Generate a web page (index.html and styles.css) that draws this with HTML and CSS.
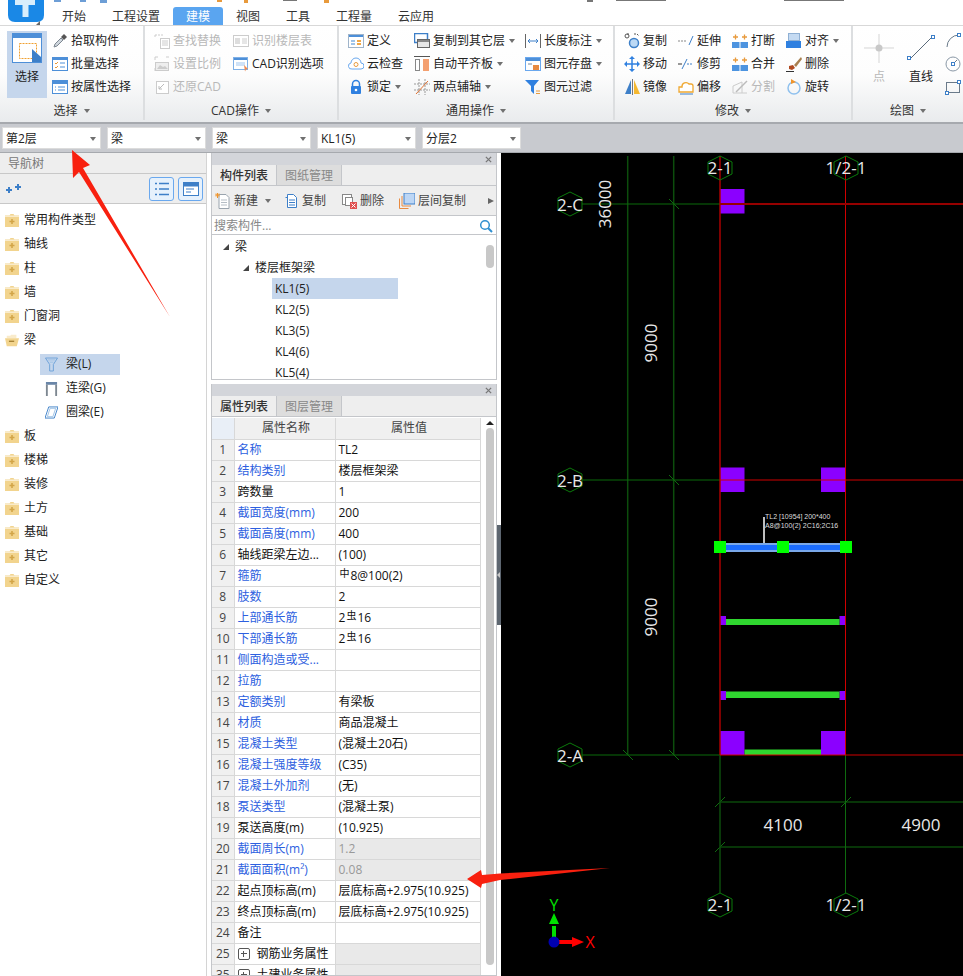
FILE: index.html
```html
<!DOCTYPE html>
<html lang="zh-CN">
<head>
    <meta charset="UTF-8">
    <meta name="viewport" content="width=device-width, initial-scale=1.0">
    <title>建模</title>
    <link rel="stylesheet" href="styles.css">
</head>
<body>
    <svg class="defs" width="0" height="0">
        <symbol id="folder" viewBox="0 0 14 14">
            <path d="M0 2.500h4.500l1-1.500h3l1 1.500H14V14H0z" fill="#f2d48e"/>
            <path d="M0 2.500h14V4H0z" fill="#f9ebcb"/>
            <path d="M4.500 8.500h5M7 6v5" stroke="#d3a548" stroke-width="1.600"/>
        </symbol>
        <symbol id="folder-open" viewBox="0 0 16 14">
            <path d="M2 2h4l1-1h6v4H2z" fill="#f9ebcb"/>
            <path d="M0 5h16l-2.500 9H2z" fill="#f2d48e"/>
            <path d="M4.500 8.500h6" stroke="#a88436" stroke-width="1.600"/>
        </symbol>
        <symbol id="close" viewBox="0 0 8 8">
            <path d="M1 1l6 6M7 1L1 7" stroke="#777" stroke-width="1.500"/>
        </symbol>
    </svg>

    <header class="topbar">
        <div class="logo">
            <svg width="36" height="22" viewBox="0 0 36 22">
                <path d="M0 0h36v15q0 7-7 7H7q-7 0-7-7z" fill="#1a88e6"/>
                <path d="M7 0h20v5h-6.500v12h-6V5H7z" fill="#d8eefc"/>
            </svg>
            <i class="logo-corner"></i>
        </div>
        <div class="top-right">
            <svg class="quick" width="914" height="4" viewBox="0 0 914 4">
                <path d="M5 0h7v2H5zM31 0h6v2h-6zM51 0h7v3h-7z" fill="#6d9ed6"/>
                <path d="M168 0h5v2h-5zM195 0h4v3h-4zM275 0h5v3h-5z" fill="#e89a3c"/>
                <path d="M234 0h14v1h-14zM538 0h6v2h-6zM567 0h50v1h-50zM735 0h60v1h-60z" fill="#777"/>
            </svg>
            <nav class="tabs">
                <span class="tab">开始</span>
                <span class="tab">工程设置</span>
                <span class="tab active">建模</span>
                <span class="tab">视图</span>
                <span class="tab">工具</span>
                <span class="tab">工程量</span>
                <span class="tab">云应用</span>
            </nav>
        </div>
    </header>

    <section class="ribbon">
        <div class="rgroup g-select">
            <div class="rbody">
                <div class="bigbtn selected">
                    <svg width="30" height="30" viewBox="0 0 30 30">
                        <rect x=".5" y=".5" width="29" height="29" fill="#fff" stroke="#4d8fd8"/>
                        <rect x="1" y="1" width="28" height="4" fill="#4d8fd8"/>
                        <rect x="7.500" y="10.500" width="17" height="15" fill="none" stroke="#f0a030" stroke-dasharray="2 1"/>
                        <path d="M20 16l9 8v5h-9z" fill="#3d7fc8"/>
                    </svg>
                    <span>选择</span>
                </div>
                <div class="rcol">
                    <div class="ritem">
                        <svg class="ico" viewBox="0 0 16 16"><path d="M2 14l1-3 6-6 2 2-6 6z" fill="#cfd6dd" stroke="#7d8791"/><path d="M9 4l3-3 3 3-3 3z" fill="#555"/></svg>
                        <span>拾取构件</span>
                    </div>
                    <div class="ritem">
                        <svg class="ico" viewBox="0 0 16 16"><rect x=".5" y="1.500" width="15" height="13" fill="#fff" stroke="#4d8fd8"/><rect x="1" y="2" width="14" height="2" fill="#4d8fd8"/><path d="M3 7l1 1 2-2M3 11l1 1 2-2" fill="none" stroke="#e89a3c"/><path d="M8 7h5M8 11h5" stroke="#4d8fd8"/></svg>
                        <span>批量选择</span>
                    </div>
                    <div class="ritem">
                        <svg class="ico" viewBox="0 0 16 16"><rect x=".5" y="1.500" width="15" height="13" fill="#fff" stroke="#4d8fd8"/><rect x="1" y="2" width="14" height="3" fill="#4d8fd8"/><path d="M3 8h1M6 8h7M3 11h1M6 11h7" stroke="#4d8fd8"/></svg>
                        <span>按属性选择</span>
                    </div>
                </div>
            </div>
            <div class="rlabel">选择<i class="caret"></i></div>
        </div>

        <div class="rgroup g-cad">
            <div class="rbody">
                <div class="rcol c79">
                    <div class="ritem off">
                        <svg class="ico" viewBox="0 0 16 16"><path d="M1 2h9M1 2v3" stroke="#ccc" stroke-dasharray="2 1"/><rect x="6.500" y="5.500" width="9" height="10" fill="#fff" stroke="#ccc"/><path d="M8 8h6M8 10h6M8 12h6" stroke="#ccc"/></svg>
                        <span>查找替换</span>
                    </div>
                    <div class="ritem off">
                        <svg class="ico" viewBox="0 0 16 16"><path d="M1 1v3M1 1h3M15 1h-3M1 15v-3" stroke="#ccc"/><rect x="1.500" y="6.500" width="13" height="8" fill="#eee" stroke="#ccc"/><path d="M3 13l3-4 3 2 2-1 3 3z" fill="#ccc"/></svg>
                        <span>设置比例</span>
                    </div>
                    <div class="ritem off">
                        <svg class="ico" viewBox="0 0 16 16"><rect x="2.500" y="2.500" width="12" height="12" fill="#fff" stroke="#ccc"/><path d="M10 5l-5 5M5 7v3h3" fill="none" stroke="#bbb"/></svg>
                        <span>还原CAD</span>
                    </div>
                </div>
                <div class="rcol">
                    <div class="ritem off">
                        <svg class="ico" viewBox="0 0 16 16"><rect x=".5" y="2.500" width="15" height="11" fill="#fff" stroke="#ccc"/><rect x="2" y="5" width="5" height="6" fill="#ddd"/><path d="M9 6h5M9 8h5M9 10h5" stroke="#ccc"/></svg>
                        <span>识别楼层表</span>
                    </div>
                    <div class="ritem">
                        <svg class="ico" viewBox="0 0 16 16"><rect x=".5" y="1.500" width="14" height="12" fill="#fff" stroke="#7fb0e6"/><rect x="1" y="2" width="13" height="2" fill="#4d8fd8"/><path d="M3 6h9v4H3z" fill="#cfe2f7"/><path d="M11 9l4 4-2 .5-1 2z" fill="#f08a50"/></svg>
                        <span>CAD识别选项</span>
                    </div>
                </div>
            </div>
            <div class="rlabel">CAD操作<i class="caret"></i></div>
        </div>

        <div class="rgroup g-common">
            <div class="rbody">
                <div class="rcol c66">
                    <div class="ritem">
                        <svg class="ico" viewBox="0 0 16 16"><rect x=".5" y="1.500" width="15" height="13" fill="#fff" stroke="#9fb4ca"/><rect x="1" y="2" width="14" height="2" fill="#4d8fd8"/><path d="M3 7h4v2H3zM3 10h4v2H3z" fill="#9fc4ea"/><path d="M9 7h4v2H9zM9 10h4v2H9z" fill="#f0a848"/></svg>
                        <span>定义</span>
                    </div>
                    <div class="ritem">
                        <svg class="ico" viewBox="0 0 16 16"><path d="M4 13a3 3 0 0 1-1-6 5 5 0 0 1 10 0 3 3 0 0 1 0 6z" fill="#fff" stroke="#6aa8ee"/><circle cx="8" cy="8.500" r="2" fill="none" stroke="#e89a3c"/></svg>
                        <span>云检查</span>
                    </div>
                    <div class="ritem">
                        <svg class="ico" viewBox="0 0 16 16"><path d="M4.500 8V5a3.500 3.500 0 0 1 7 0v3" fill="none" stroke="#2f80e0" stroke-width="1.500"/><rect x="3" y="7" width="10" height="8" rx="1" fill="#2f80e0"/><circle cx="8" cy="11" r="1.300" fill="#fff"/></svg>
                        <span>锁定</span><i class="caret"></i>
                    </div>
                </div>
                <div class="rcol c111">
                    <div class="ritem">
                        <svg class="ico" viewBox="0 0 16 16"><rect x=".5" y=".5" width="13" height="9" fill="#fff" stroke="#3d7fc8" stroke-width="1.500"/><rect x="3.500" y="6.500" width="12" height="8" fill="#e6e6e6" stroke="#666"/><rect x="4" y="7" width="11" height="2" fill="#888"/></svg>
                        <span>复制到其它层</span><i class="caret"></i>
                    </div>
                    <div class="ritem">
                        <svg class="ico" viewBox="0 0 16 16"><path d="M0 .5h16" stroke="#555"/><rect x="1.500" y="3.500" width="4" height="11" fill="#fff" stroke="#888"/><rect x="9" y="3" width="6" height="12" fill="#f4a070"/></svg>
                        <span>自动平齐板</span><i class="caret"></i>
                    </div>
                    <div class="ritem">
                        <svg class="ico" viewBox="0 0 16 16"><path d="M0 5h16M0 11h16M5 0v16M11 0v16" stroke="#999" stroke-dasharray="2 1"/><path d="M2 15L14 2" stroke="#e07030"/></svg>
                        <span>两点辅轴</span><i class="caret"></i>
                    </div>
                </div>
                <div class="rcol">
                    <div class="ritem">
                        <svg class="ico" viewBox="0 0 16 16"><path d="M.5 1v14M15.500 1v14" stroke="#666"/><path d="M3 8h10M3 8l2-2M3 8l2 2M13 8l-2-2M13 8l-2 2" fill="none" stroke="#3d7fc8"/></svg>
                        <span>长度标注</span><i class="caret"></i>
                    </div>
                    <div class="ritem">
                        <svg class="ico" viewBox="0 0 16 16"><rect x=".5" y="1.500" width="15" height="13" fill="#fff" stroke="#6aa8ee"/><rect x="1" y="2" width="14" height="3" fill="#4d8fd8"/><path d="M3 7h4v2H3z" fill="#b8c4d0"/><rect x="8" y="9" width="6" height="5" fill="#e88a40"/></svg>
                        <span>图元存盘</span><i class="caret"></i>
                    </div>
                    <div class="ritem">
                        <svg class="ico" viewBox="0 0 16 16"><path d="M0 1h14L9 7v8L6 12V7z" fill="#2f80e0"/><path d="M11 12h4M11 14.500h4" stroke="#e89a3c"/></svg>
                        <span>图元过滤</span>
                    </div>
                </div>
            </div>
            <div class="rlabel">通用操作<i class="caret"></i></div>
        </div>

        <div class="rgroup g-modify">
            <div class="rbody">
                <div class="rcol c54">
                    <div class="ritem">
                        <svg class="ico" viewBox="0 0 16 16"><path d="M3 1h3M10 1h3l2 2" fill="none" stroke="#555" stroke-dasharray="2 1"/><circle cx="3" cy="3" r="2" fill="none" stroke="#555"/><circle cx="10" cy="10" r="4.500" fill="#bcd9f5" stroke="#3d7fc8" stroke-width="1.500"/></svg>
                        <span>复制</span>
                    </div>
                    <div class="ritem">
                        <svg class="ico" viewBox="0 0 16 16"><path d="M8 1v14M1 8h14" stroke="#2f80e0" stroke-width="1.500"/><path d="M8 0l3 3H5zM8 16l3-3H5zM0 8l3-3v6zM16 8l-3-3v6z" fill="#2f80e0"/></svg>
                        <span>移动</span>
                    </div>
                    <div class="ritem">
                        <svg class="ico" viewBox="0 0 16 16"><path d="M7 1v14L1 15z" fill="#3d7fc8"/><path d="M8.500 0v16" stroke="#777"/><path d="M10 1l6 14h-6z" fill="#f5b830"/></svg>
                        <span>镜像</span>
                    </div>
                </div>
                <div class="rcol c54">
                    <div class="ritem">
                        <svg class="ico" viewBox="0 0 16 16"><path d="M0 8h9" stroke="#888" stroke-dasharray="2 1"/><path d="M11 12l4-9" stroke="#3d7fc8"/></svg>
                        <span>延伸</span>
                    </div>
                    <div class="ritem">
                        <svg class="ico" viewBox="0 0 16 16"><path d="M0 8h4" stroke="#333"/><path d="M4 13l5-10" stroke="#3d7fc8"/><path d="M9 8h6" stroke="#3d7fc8" stroke-dasharray="2 1"/></svg>
                        <span>修剪</span>
                    </div>
                    <div class="ritem">
                        <svg class="ico" viewBox="0 0 16 16"><path d="M1 13V8h3a4 4 0 0 1 7-3h2a2 2 0 0 1 2 2v6z" fill="#fff" stroke="#f0a830" stroke-width="1.300"/><path d="M2 15h13" stroke="#3d7fc8"/></svg>
                        <span>偏移</span>
                    </div>
                </div>
                <div class="rcol c54">
                    <div class="ritem">
                        <svg class="ico" viewBox="0 0 16 16"><path d="M0 9h7.500v6H0zM8.500 9H16v6H8.500z" fill="#4d94e0"/><path d="M1 4h5M3.500 1.500v5M10 4h5M12.500 1.500v5" stroke="#e89a3c" stroke-width="1.300"/></svg>
                        <span>打断</span>
                    </div>
                    <div class="ritem">
                        <svg class="ico" viewBox="0 0 16 16"><path d="M0 9h7.500v6H0zM8.500 9H16v6H8.500z" fill="#4d94e0"/><path d="M1 4h5M3.500 1.500v5M10 4h5M12.500 1.500v5" stroke="#e89a3c" stroke-width="1.300"/></svg>
                        <span>合并</span>
                    </div>
                    <div class="ritem off">
                        <svg class="ico" viewBox="0 0 16 16"><path d="M1 14h14M1 14V7l9-4v11" fill="none" stroke="#ccc"/><path d="M4 13L15 2" stroke="#bbb" stroke-width="1.500"/></svg>
                        <span>分割</span>
                    </div>
                </div>
                <div class="rcol">
                    <div class="ritem">
                        <svg class="ico" viewBox="0 0 16 16"><rect x="2.500" y=".5" width="11" height="7" fill="#c4daf2" stroke="#8fb0d4"/><rect x="0" y="8" width="15" height="7" fill="#2f80e0"/></svg>
                        <span>对齐</span><i class="caret"></i>
                    </div>
                    <div class="ritem">
                        <svg class="ico" viewBox="0 0 16 16"><path d="M8 9L15 1l1 2-6 8z" fill="#a88050"/><path d="M3 10l4-1 2 3-3 2-3-1z" fill="#b04a20"/><path d="M0 15.500h8" stroke="#333"/></svg>
                        <span>删除</span>
                    </div>
                    <div class="ritem">
                        <svg class="ico" viewBox="0 0 16 16"><circle cx="8" cy="9" r="6" fill="none" stroke="#8fc0ee" stroke-width="1.500"/><path d="M5 0l5 3-5 2z" fill="#f0952c"/></svg>
                        <span>旋转</span>
                    </div>
                </div>
            </div>
            <div class="rlabel">修改<i class="caret"></i></div>
        </div>

        <div class="rgroup g-draw">
            <div class="rbody">
                <div class="bigbtn off">
                    <svg width="30" height="30" viewBox="0 0 30 30"><path d="M15 1v29M0 15h30" stroke="#d5d5d5"/><circle cx="15" cy="15" r="3.500" fill="#c8c8c8"/></svg>
                    <span>点</span>
                </div>
                <div class="bigbtn">
                    <svg width="30" height="30" viewBox="0 0 30 30"><path d="M4 26L26 4" stroke="#5a6a7a"/><rect x="1.500" y="23.500" width="3" height="3" fill="#fff" stroke="#3d7fc8"/><rect x="25.500" y="2.500" width="3" height="3" fill="#fff" stroke="#3d7fc8"/></svg>
                    <span>直线</span>
                </div>
                <div class="rcol">
                    <div class="ritem"><svg class="ico" viewBox="0 0 16 16"><path d="M2 14a12 12 0 0 1 12-12" fill="none" stroke="#6a7a8a"/><rect x="12.500" y=".5" width="3" height="3" fill="#fff" stroke="#3d7fc8"/></svg></div>
                    <div class="ritem"><svg class="ico" viewBox="0 0 16 16"><circle cx="8" cy="8" r="7" fill="none" stroke="#8a98a6"/><path d="M8 8l4-4" stroke="#6a7a8a"/><rect x="6.500" y="6.500" width="3" height="3" fill="#fff" stroke="#3d7fc8"/></svg></div>
                    <div class="ritem"><svg class="ico" viewBox="0 0 16 16"><rect x="1.500" y="3.500" width="13" height="10" fill="none" stroke="#6a7a8a"/><rect x=".5" y="12.500" width="3" height="3" fill="#fff" stroke="#3d7fc8"/><rect x="12.500" y="1.500" width="3" height="3" fill="#fff" stroke="#3d7fc8"/></svg></div>
                </div>
            </div>
            <div class="rlabel">绘图<i class="caret"></i></div>
        </div>
    </section>

    <div class="selectbar">
        <div class="combo">第2层<i class="caret"></i></div>
        <div class="combo">梁<i class="caret"></i></div>
        <div class="combo">梁<i class="caret"></i></div>
        <div class="combo">KL1(5)<i class="caret"></i></div>
        <div class="combo">分层2<i class="caret"></i></div>
    </div>

    <main class="main">
        <aside class="nav">
            <div class="nav-title">导航树</div>
            <div class="nav-tools">
                <svg class="sparkle" width="16" height="12" viewBox="0 0 16 12"><path d="M0 7h6M3 4v6M9 4h6M12 1v6" stroke="#3d7fc8" stroke-width="2"/></svg>
                <span class="spacer"></span>
                <div class="toolbtn">
                    <svg width="14" height="14" viewBox="0 0 14 14"><path d="M0 1.500h2M4 1.500h10M0 7h2M4 7h10M0 12.500h2M4 12.500h10" stroke="#3d7fc8" stroke-width="1.300"/></svg>
                </div>
                <div class="toolbtn">
                    <svg width="16" height="14" viewBox="0 0 16 14"><rect x=".5" y=".5" width="15" height="13" fill="#fff" stroke="#3d7fc8"/><rect x="1" y="1" width="14" height="3.500" fill="#3d7fc8"/><path d="M3 7h8M3 10h5" stroke="#3d7fc8"/></svg>
                </div>
            </div>
            <ul class="nav-tree">
                <li><svg class="folder"><use href="#folder"/></svg>常用构件类型</li>
                <li><svg class="folder"><use href="#folder"/></svg>轴线</li>
                <li><svg class="folder"><use href="#folder"/></svg>柱</li>
                <li><svg class="folder"><use href="#folder"/></svg>墙</li>
                <li><svg class="folder"><use href="#folder"/></svg>门窗洞</li>
                <li><svg class="folder"><use href="#folder-open"/></svg>梁</li>
                <li class="child">
                    <span class="child-box current">
                        <svg class="child-ico" viewBox="0 0 14 16"><path d="M.5 1h13L9 8v7H5V8z" fill="none" stroke="#6aa0d8"/><path d="M3 3h8M5 5.500h4" stroke="#9cc0e4"/></svg>梁(L)
                    </span>
                </li>
                <li class="child">
                    <span class="child-box">
                        <svg class="child-ico" viewBox="0 0 14 16"><path d="M1 1h12v3H1z" fill="#6a86a8"/><path d="M2 4v12M12 4v12" stroke="#7d8791" stroke-width="2"/></svg>连梁(G)
                    </span>
                </li>
                <li class="child">
                    <span class="child-box">
                        <svg class="child-ico" viewBox="0 0 14 16"><path d="M4 2h10l-4 12H0z" fill="none" stroke="#3d7fc8"/><path d="M5.500 3.500h6l-3 9H2.500z" fill="none" stroke="#9cc0e4"/></svg>圈梁(E)
                    </span>
                </li>
                <li><svg class="folder"><use href="#folder"/></svg>板</li>
                <li><svg class="folder"><use href="#folder"/></svg>楼梯</li>
                <li><svg class="folder"><use href="#folder"/></svg>装修</li>
                <li><svg class="folder"><use href="#folder"/></svg>土方</li>
                <li><svg class="folder"><use href="#folder"/></svg>基础</li>
                <li><svg class="folder"><use href="#folder"/></svg>其它</li>
                <li><svg class="folder"><use href="#folder"/></svg>自定义</li>
            </ul>
        </aside>

        <div class="middle">
            <section class="panel list-panel">
                <div class="panel-strip"><svg class="close"><use href="#close"/></svg></div>
                <div class="panel-tabs">
                    <span class="ptab active">构件列表</span>
                    <span class="ptab">图纸管理</span>
                </div>
                <div class="list-tools">
                    <span class="ltool ltool-new">
                        <svg class="ico" viewBox="0 0 16 16"><path d="M4 1.500h7l3 3v11H4z" fill="#fff" stroke="#9aa4ae"/><path d="M6 7h6M6 9.500h6M6 12h6" stroke="#b5bdc5"/><path d="M0 2h5M2.500 0v5M1 .5l3 3M4 .5l-3 3" stroke="#f0952c"/></svg>
                        新建<i class="caret"></i>
                    </span>
                    <span class="ltool">
                        <svg class="ico" viewBox="0 0 16 16"><path d="M2.500 4.500h2M4.500 1.500h6l3 3v10h-9z" fill="#fff" stroke="#3d7fc8"/><path d="M6 7h6M6 9.500h6M6 12h6" stroke="#3d7fc8"/></svg>
                        复制
                    </span>
                    <span class="ltool">
                        <svg class="ico" viewBox="0 0 16 16"><rect x="1.500" y="1.500" width="9" height="10" fill="#fff" stroke="#888"/><rect x="4.500" y="4.500" width="7" height="8" fill="#fff" stroke="#888"/><rect x="9" y="9" width="7" height="7" fill="#e05050"/><path d="M10.500 10.500l4 4M14.500 10.500l-4 4" stroke="#fff"/></svg>
                        删除
                    </span>
                    <span class="ltool">
                        <svg class="ico" viewBox="0 0 16 16"><path d="M.5 5.500v10h9M3 3v10h9" fill="none" stroke="#e88a40"/><rect x="5" y="0" width="11" height="11" fill="#bcd6f5" stroke="#3d7fc8"/></svg>
                        层间复制
                    </span>
                    <span class="more"></span>
                </div>
                <div class="search">
                    <span>搜索构件...</span>
                    <svg width="14" height="14" viewBox="0 0 14 14"><circle cx="6" cy="6" r="4.300" fill="none" stroke="#2f8fd0" stroke-width="1.500"/><path d="M9 9l4 4" stroke="#2f8fd0" stroke-width="2"/></svg>
                </div>
                <div class="list-body">
                    <ul class="list-tree">
                        <li class="lv1"><i class="expand"></i>梁</li>
                        <li class="lv2"><i class="expand"></i>楼层框架梁</li>
                        <li class="lv3 current">KL1(5)</li>
                        <li class="lv3">KL2(5)</li>
                        <li class="lv3">KL3(5)</li>
                        <li class="lv3">KL4(6)</li>
                        <li class="lv3">KL5(4)</li>
                    </ul>
                    <div class="list-thumb"></div>
                </div>
            </section>

            <section class="panel prop-panel">
                <div class="panel-strip"><svg class="close"><use href="#close"/></svg></div>
                <div class="panel-tabs">
                    <span class="ptab active">属性列表</span>
                    <span class="ptab">图层管理</span>
                </div>
                <div class="prop-body">
                    <table class="props">
                        <colgroup><col class="c-num"><col class="c-name"><col class="c-val"></colgroup>
                        <thead>
                            <tr><th class="corner"></th><th>属性名称</th><th>属性值</th></tr>
                        </thead>
                        <tbody>
                            <tr><td class="num">1</td><td class="link">名称</td><td>TL2</td></tr>
                            <tr><td class="num">2</td><td class="link">结构类别</td><td>楼层框架梁</td></tr>
                            <tr><td class="num">3</td><td>跨数量</td><td>1</td></tr>
                            <tr><td class="num">4</td><td class="link">截面宽度(mm)</td><td>200</td></tr>
                            <tr><td class="num">5</td><td class="link">截面高度(mm)</td><td>400</td></tr>
                            <tr><td class="num">6</td><td>轴线距梁左边...</td><td>(100)</td></tr>
                            <tr><td class="num">7</td><td class="link">箍筋</td><td><span class="rebar">中</span>8@100(2)</td></tr>
                            <tr><td class="num">8</td><td class="link">肢数</td><td>2</td></tr>
                            <tr><td class="num">9</td><td class="link">上部通长筋</td><td>2<span class="rebar">虫</span>16</td></tr>
                            <tr><td class="num">10</td><td class="link">下部通长筋</td><td>2<span class="rebar">虫</span>16</td></tr>
                            <tr><td class="num">11</td><td class="link">侧面构造或受...</td><td></td></tr>
                            <tr><td class="num">12</td><td class="link">拉筋</td><td></td></tr>
                            <tr><td class="num">13</td><td class="link">定额类别</td><td>有梁板</td></tr>
                            <tr><td class="num">14</td><td class="link">材质</td><td>商品混凝土</td></tr>
                            <tr><td class="num">15</td><td class="link">混凝土类型</td><td>(混凝土20石)</td></tr>
                            <tr><td class="num">16</td><td class="link">混凝土强度等级</td><td>(C35)</td></tr>
                            <tr><td class="num">17</td><td class="link">混凝土外加剂</td><td>(无)</td></tr>
                            <tr><td class="num">18</td><td class="link">泵送类型</td><td>(混凝土泵)</td></tr>
                            <tr><td class="num">19</td><td>泵送高度(m)</td><td>(10.925)</td></tr>
                            <tr><td class="num">20</td><td class="link">截面周长(m)</td><td class="locked">1.2</td></tr>
                            <tr><td class="num">21</td><td class="link">截面面积(m²)</td><td class="locked">0.08</td></tr>
                            <tr><td class="num">22</td><td>起点顶标高(m)</td><td>层底标高+2.975(10.925)</td></tr>
                            <tr><td class="num">23</td><td>终点顶标高(m)</td><td>层底标高+2.975(10.925)</td></tr>
                            <tr><td class="num">24</td><td>备注</td><td></td></tr>
                            <tr><td class="num">25</td><td><i class="plus"></i>钢筋业务属性</td><td class="locked"></td></tr>
                            <tr><td class="num">35</td><td><i class="plus"></i>土建业务属性</td><td class="locked"></td></tr>
                        </tbody>
                    </table>
                    <div class="prop-scroll">
                        <i class="scroll-up"></i>
                        <div class="prop-thumb"></div>
                    </div>
                </div>
            </section>
        </div>

        <div class="splitter"><div class="split-handle"><i></i></div></div>

        <div class="canvas">
            <svg class="drawing" width="462" height="823" viewBox="501 153 462 823">
                <!-- dimension lines -->
                <g stroke="#0c4d0c" fill="none">
                    <path d="M627.700 156V755M673.700 156V755" stroke-width="1.500"/>
                    <path d="M720 802H963M720 847H963" stroke="#0f6a0f"/>
                    <path d="M669 199l10 10M669 475l10 10M623 750l10 10M669 750l10 10M715 807l10-10M841 807l10-10M715 852l10-10" stroke="#0f6a0f"/>
                </g>
                <!-- axes -->
                <g fill="none">
                    <path d="M582 204H720M582 480H720M582 755H720" stroke="#0b6a0b"/>
                    <path d="M720 755V893" stroke="#0c4d0c" stroke-width="1.500"/>
                    <path d="M845.500 755V893" stroke="#0f6a0f"/>
                </g>
                <!-- columns -->
                <g fill="#8b00ff">
                    <rect x="720" y="189" width="24.500" height="24.500"/>
                    <rect x="720" y="467.500" width="24.500" height="24.500"/>
                    <rect x="821" y="467.500" width="24.500" height="24.500"/>
                    <rect x="720" y="731" width="24.500" height="24"/>
                    <rect x="821" y="731" width="24.500" height="24"/>
                    <rect x="720" y="616" width="6" height="9"/>
                    <rect x="839.500" y="616" width="6" height="9"/>
                    <rect x="720" y="691" width="6" height="9"/>
                    <rect x="839.500" y="691" width="6" height="9"/>
                </g>
                <!-- beams -->
                <g fill="#2fd62f">
                    <rect x="726" y="619" width="113.500" height="6"/>
                    <rect x="726" y="691.500" width="113.500" height="6.500"/>
                    <rect x="744.500" y="749.500" width="76.500" height="5.500"/>
                </g>
                <rect x="726" y="543" width="114" height="9" fill="#7aa8e8"/>
                <rect x="726" y="545" width="114" height="5" fill="#1a6cff"/>
                <g fill="none">
                    <path d="M720 156V755" stroke="#a80000" stroke-width="1.500"/>
                    <path d="M845.500 156V755" stroke="#d00000"/>
                    <path d="M720 204H963" stroke="#960000" stroke-width="2"/>
                    <path d="M720 480H963M720 755H963" stroke="#d00000"/>
                </g>
                <g fill="#00ff00">
                    <rect x="714" y="541" width="12" height="12"/>
                    <rect x="777" y="541" width="12" height="12"/>
                    <rect x="840" y="541" width="12" height="12"/>
                </g>
                <path d="M764 517V543" stroke="#fff" stroke-width="1.500"/>
                <!-- axis bubbles -->
                <g fill="none" stroke="#0b7a0b">
                    <path d="M570 192l12 6v12l-12 6-12-6v-12z"/>
                    <path d="M570 468l12 6v12l-12 6-12-6v-12z"/>
                    <path d="M570 743l12 6v12l-12 6-12-6v-12z"/>
                    <path d="M720 156l12 6v12l-12 6-12-6v-12z"/>
                    <path d="M846 156l12 6v12l-12 6-12-6v-12z"/>
                    <path d="M720 893l12 6v12l-12 6-12-6v-12z"/>
                    <path d="M846 893l12 6v12l-12 6-12-6v-12z"/>
                </g>
                <g class="cad-text">
                    <text x="570" y="211">2-C</text>
                    <text x="570" y="487">2-B</text>
                    <text x="570" y="762">2-A</text>
                    <text x="720" y="174">2-1</text>
                    <text x="846" y="174">1/2-1</text>
                    <text x="720" y="911">2-1</text>
                    <text x="846" y="911">1/2-1</text>
                    <text x="783" y="831">4100</text>
                    <text x="921" y="831">4900</text>
                    <text transform="translate(611 204) rotate(-90)">36000</text>
                    <text transform="translate(657 343) rotate(-90)">9000</text>
                    <text transform="translate(657 617) rotate(-90)">9000</text>
                </g>
                <g class="cad-small">
                    <text x="765" y="519">TL2 [10954] 200*400</text>
                    <text x="765" y="528">A8@100(2) 2C16;2C16</text>
                </g>
                <!-- coordinate axes -->
                <path d="M554 942V926" stroke="#00e000" stroke-width="4"/>
                <path d="M554 913l5 11h-10z" fill="#00e000"/>
                <path d="M554 942H572" stroke="#ff0000" stroke-width="4"/>
                <path d="M584 942l-12-5v10z" fill="#ff0000"/>
                <circle cx="554" cy="942" r="5.500" fill="#0000b0"/>
                <text class="axis-y" x="554" y="911">Y</text>
                <text class="axis-x" x="590" y="948">X</text>
            </svg>
        </div>
    </main>

    <!-- red annotation arrows over the screenshot -->
    <svg class="marks" width="963" height="976" viewBox="0 0 963 976">
        <path d="M72 150L90 165 83 168 170 317 79 172 73 178z" fill="#f8200f"/>
        <path d="M467 879L481 870 482 875 500 873.500 610 868 500 880 482 884 481 888z" fill="#f8200f"/>
    </svg>
</body>
</html>
```

FILE: styles.css
```css
* {
    box-sizing: border-box;
}

html, body {
    height: 976px;
    overflow: hidden;
}

body {
    margin: 0;
    width: 963px;
    position: relative;
    font-family: "Open Sans", "Noto Sans CJK SC", "Liberation Sans", sans-serif;
    font-size: 12px;
    line-height: 16px;
    color: #222;
    background-color: #fff;
}

ul {
    list-style: none;
    margin: 0;
    padding: 0;
}

i {
    display: block;
}

.defs {
    position: absolute;
}

.caret {
    display: inline-block;
    width: 0;
    height: 0;
    border-left: 3.500px solid transparent;
    border-right: 3.500px solid transparent;
    border-top: 4px solid #707070;
    vertical-align: middle;
}

/* top */
.topbar {
    display: flex;
    height: 26px;
    border-bottom: 1px solid #d8d8d8;
}

.logo {
    width: 49px;
    padding-left: 8px;
    position: relative;
}

.logo-corner {
    position: absolute;
    left: 36px;
    bottom: 0;
    width: 0;
    height: 0;
    border-left: 4px solid transparent;
    border-bottom: 4px solid #666;
}

.top-right {
    flex: 1;
}

.quick {
    display: block;
}

.tabs {
    display: flex;
    height: 21px;
    padding-top: 3px;
}

.tab {
    padding: 0 13px;
    height: 18px;
    line-height: 19px;
    color: #333;
}

.tab.active {
    color: #fff;
    background-color: #5aa5f0;
    border-radius: 3px 3px 0 0;
}

/* ribbon */
.ribbon {
    display: flex;
    height: 98px;
    background: linear-gradient(#fff, #fdfdfd 50%, #e9ebed);
    border-bottom: 2px solid #a6a9ae;
}

.rgroup {
    display: flex;
    flex-direction: column;
    height: 94px;
    border-right: 2px solid #dcdee0;
}

.g-select { width: 145px; }
.g-cad { width: 194px; }
.g-common { width: 276px; }
.g-modify { width: 238px; }
.g-draw { flex: 1; border-right: none; }

.rbody {
    display: flex;
    height: 75px;
    padding: 3px 0 0 9px;
}

.g-select .rbody {
    padding-left: 7px;
}

.g-draw .rbody {
    padding-left: 8px;
    gap: 6px;
}

.rlabel {
    display: flex;
    justify-content: center;
    align-items: center;
    gap: 6px;
    height: 19px;
    color: #333;
}

.rcol {
    display: flex;
    flex-direction: column;
    flex-shrink: 0;
}

.c54 { width: 54px; }
.c66 { width: 66px; }
.c79 { width: 79px; }
.c111 { width: 111px; }

.ritem {
    display: flex;
    align-items: center;
    gap: 3px;
    height: 23px;
    white-space: nowrap;
}

.ritem .caret {
    margin-left: 1px;
}

.ritem.off, .bigbtn.off {
    color: #b8b8b8;
}

.ico {
    width: 16px;
    height: 16px;
    flex-shrink: 0;
}

.bigbtn {
    display: flex;
    flex-direction: column;
    align-items: center;
    width: 36px;
    height: 67px;
    margin-top: 2px;
    padding-top: 2px;
    gap: 6px;
}

.bigbtn.selected {
    width: 40px;
    margin-right: 5px;
    background-color: #c5d6ec;
}

/* combos */
.selectbar {
    display: flex;
    gap: 6px;
    height: 28px;
    padding: 3px 2px 0;
    background-color: #c8cacf;
}

.combo {
    display: flex;
    align-items: center;
    justify-content: space-between;
    width: 99px;
    height: 22px;
    padding: 1px 4px 0 3px;
    background-color: #fff;
    border: 1px solid #dcdcdc;
}

/* main */
.main {
    display: flex;
    height: 824px;
    border-top: 1px solid #a6a9ae;
}

.nav {
    width: 207px;
    border-right: 1px solid #d4d4d4;
    flex-shrink: 0;
}

.nav-title {
    height: 21px;
    padding-left: 8px;
    line-height: 22px;
    color: #777;
    background-color: #eee;
    border-bottom: 1px solid #c8c8c8;
}

.nav-tools {
    display: flex;
    align-items: center;
    gap: 4px;
    height: 30px;
    padding: 0 3px 0 6px;
    background-color: #eee;
    border-bottom: 1px solid #c8c8c8;
}

.spacer {
    flex: 1;
}

.toolbtn {
    display: flex;
    justify-content: center;
    align-items: center;
    width: 25px;
    height: 24px;
    background-color: #e6f1fc;
    border: 1px solid #6aa8ee;
    border-radius: 3px;
}

.nav-tree {
    padding-top: 4px;
}

.nav-tree li {
    display: flex;
    align-items: center;
    height: 24px;
    padding-left: 5px;
    gap: 5px;
}

.folder {
    width: 14px;
    height: 14px;
}

.nav-tree .child {
    padding-left: 40px;
}

.child-box {
    display: flex;
    align-items: center;
    gap: 8px;
    width: 80px;
    height: 21px;
    padding-left: 5px;
}

.child-box.current {
    background-color: #c5d6ec;
}

.child-ico {
    width: 13px;
    height: 15px;
}

/* middle panels */
.middle {
    display: flex;
    flex-direction: column;
    gap: 4px;
    width: 286px;
    margin-left: 4px;
    flex-shrink: 0;
}

.panel {
    border: 1px solid #c4c6ca;
    border-top: none;
    background-color: #fff;
}

.list-panel {
    height: 227px;
}

.prop-panel {
    height: 592px;
    overflow: hidden;
}

.panel-strip {
    display: flex;
    justify-content: flex-end;
    align-items: center;
    height: 12px;
    padding-right: 4px;
    background-color: #d3d5da;
}

.close {
    width: 7px;
    height: 7px;
}

.panel-tabs {
    display: flex;
    height: 21px;
    background-color: #eee;
    border-bottom: 1px solid #c4c6ca;
}

.ptab {
    width: 65px;
    text-align: center;
    line-height: 22px;
    color: #888;
    background-color: #ddd;
    border-right: 1px solid #c4c6ca;
}

.ptab.active {
    color: #333;
    font-weight: 500;
    background-color: #eee;
}

.list-tools {
    display: flex;
    align-items: center;
    height: 30px;
    padding: 1px 0 0 3px;
    gap: 15px;
    color: #444;
    background-color: #eee;
    border-bottom: 1px solid #c4c6ca;
}

.ltool {
    display: flex;
    align-items: center;
    gap: 3px;
}

.ltool-new {
    margin-right: -3px;
}

.ltool .caret {
    margin-left: 4px;
}

.more {
    margin-left: auto;
    margin-right: 2px;
    width: 0;
    height: 0;
    border-top: 3px solid transparent;
    border-bottom: 3px solid transparent;
    border-left: 6px solid #666;
}

.search {
    display: flex;
    justify-content: space-between;
    align-items: center;
    height: 19px;
    padding: 1px 3px 0 2px;
    color: #888;
    border-bottom: 1px solid #c4c6ca;
}

.list-body {
    display: flex;
    height: 144px;
    overflow: hidden;
}

.list-tree {
    flex: 1;
    padding-top: 1px;
}

.list-tree li {
    display: flex;
    align-items: center;
    height: 21px;
    white-space: nowrap;
}

.expand {
    width: 0;
    height: 0;
    margin-right: 6px;
    border-left: 6px solid transparent;
    border-bottom: 6px solid #444;
}

.lv1 { padding-left: 11px; }
.lv2 { padding-left: 31px; }

.list-tree .lv3 {
    width: 126px;
    margin-left: 60px;
    padding-left: 3px;
}

.list-tree .lv3.current {
    background-color: #c5d6ec;
}

.list-thumb {
    width: 8px;
    height: 23px;
    margin: 10px 2px 0 0;
    background-color: #c8c8c8;
    border-radius: 4px;
}

/* property table */
.prop-body {
    display: flex;
    height: 559px;
    padding-top: 1px;
}

.props {
    width: 268px;
    height: 0;
    flex-shrink: 0;
    table-layout: fixed;
    border-collapse: collapse;
}

.c-num { width: 22px; }
.c-name { width: 101px; }
.c-val { width: 145px; }

.props th, .props td {
    height: 21px;
    padding: 0 0 0 3px;
    border: 1px solid #d8d8d8;
    border-top: none;
    white-space: nowrap;
    overflow: hidden;
    font-weight: 400;
    color: #111;
}

.props th {
    text-align: center;
    color: #444;
    background-color: #f0f0f0;
}

.props th.corner {
    background-color: #e9eff7;
}

.props .num {
    padding: 0;
    text-align: center;
    color: #444;
    background-color: #f0f0f0;
}

.props td:first-child, .props th:first-child {
    border-left: none;
}

.props td.link {
    color: #2d5fe0;
}

.props .locked {
    color: #999;
    background-color: #e9e9e9;
}

.plus {
    display: inline-block;
    width: 12px;
    height: 12px;
    margin-right: 7px;
    vertical-align: -2px;
    border: 1px solid #555;
    border-radius: 2px;
    background:
        linear-gradient(#555, #555) center / 6px 1px no-repeat,
        linear-gradient(#555, #555) center / 1px 6px no-repeat;
}

.rebar {
    display: inline-block;
    margin: 0 1px;
    font-size: 10px;
    line-height: 10px;
    vertical-align: 3px;
}

.prop-scroll {
    flex: 1;
    padding: 3px 0 0 5px;
}

.scroll-up {
    width: 0;
    height: 0;
    border-left: 4px solid transparent;
    border-right: 4px solid transparent;
    border-bottom: 4px solid #222;
}

.prop-thumb {
    width: 8px;
    height: 537px;
    margin-top: 3px;
    background-color: #c8c8c8;
    border-radius: 4px;
}

/* splitter and drawing */
.splitter {
    width: 4px;
    flex-shrink: 0;
    padding-top: 372px;
}

.split-handle {
    display: flex;
    align-items: center;
    height: 100px;
    background-color: #5d6670;
}

.split-handle i {
    width: 0;
    height: 0;
    border-top: 3px solid transparent;
    border-bottom: 3px solid transparent;
    border-right: 3px solid #c8c8c8;
}

.canvas {
    flex: 1;
    background-color: #000;
    overflow: hidden;
}

.drawing {
    display: block;
}

.cad-text text {
    font-family: "Open Sans", "Liberation Sans", sans-serif;
    font-size: 17px;
    fill: #e8e8e8;
    text-anchor: middle;
}

.cad-small text {
    font-family: "Liberation Sans", sans-serif;
    font-size: 7px;
    fill: #ddd;
}

.axis-y, .axis-x {
    font-family: "Open Sans", "Liberation Sans", sans-serif;
    font-size: 16px;
    text-anchor: middle;
}

.axis-y { fill: #00e000; }
.axis-x { fill: #ff0000; }

.marks {
    position: absolute;
    left: 0;
    top: 0;
    pointer-events: none;
}
```
